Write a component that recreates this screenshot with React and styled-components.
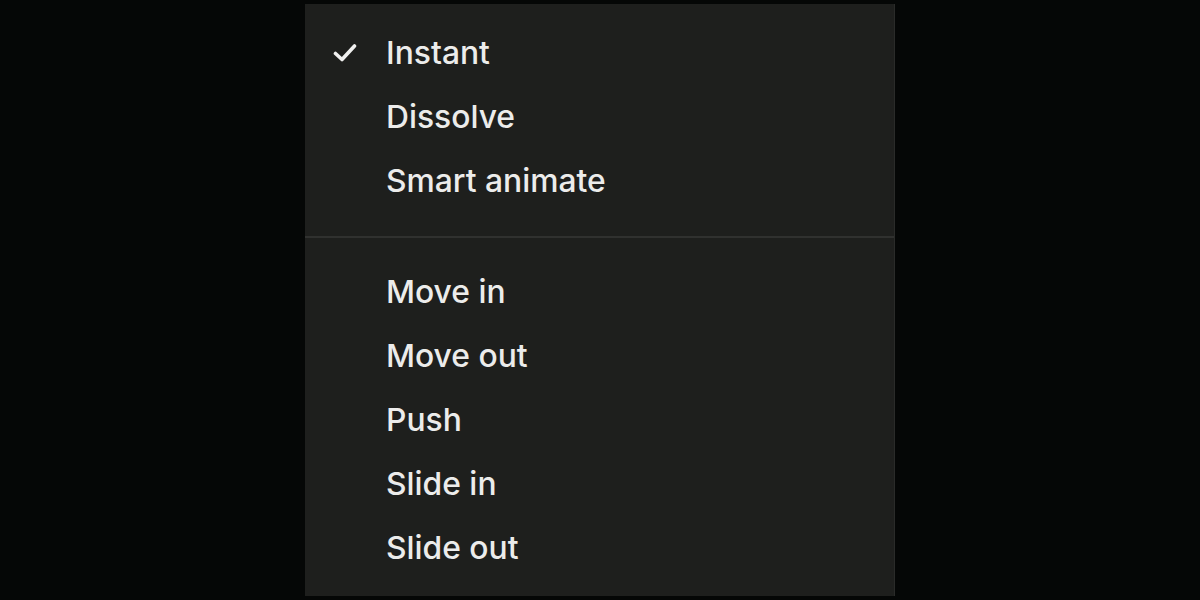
import React from "react";
import styled, { createGlobalStyle } from "styled-components";

const GlobalStyle = createGlobalStyle`
  html, body {
    margin: 0;
    padding: 0;
    background: #050706;
  }
  body {
    font-family: Inter, "Noto Sans", sans-serif;
    -webkit-font-smoothing: antialiased;
  }
`;

const Page = styled.div`
  display: flex;
  justify-content: center;
  padding: 4px 0;
  height: 600px;
  box-sizing: border-box;
`;

const Menu = styled.div`
  width: 590px;
  height: 592px;
  box-sizing: border-box;
  background: #1e1f1d;
  border-right: 1px solid #2a2b29;
  padding: 17px 0 17px;
  display: flex;
  flex-direction: column;
`;

const Item = styled.div`
  display: flex;
  align-items: center;
  height: 64px;
  padding-left: 28px;
  color: #ececeb;
  font-size: 31.8px;
  font-weight: 500;
`;

const CheckSlot = styled.span`
  width: 53px;
  display: flex;
  align-items: center;
`;

const Separator = styled.div`
  height: 2px;
  background: #30312f;
  margin: 23px 0 22px;
`;

const Check = () => (
  <svg width="24" height="20" viewBox="0 0 24 20">
    <path
      d="M2.5 10.5 L9 16.5 L21.5 3"
      fill="none"
      stroke="#f0f0ef"
      strokeWidth="3.6"
      strokeLinecap="round"
      strokeLinejoin="round"
    />
  </svg>
);

const groups = [
  ["Instant", "Dissolve", "Smart animate"],
  ["Move in", "Move out", "Push", "Slide in", "Slide out"],
];

export default function App() {
  const selected = "Instant";
  return (
    <>
      <GlobalStyle />
      <Page>
        <Menu>
          {groups.map((group, gi) => (
            <React.Fragment key={gi}>
              {gi > 0 && <Separator />}
              {group.map((label) => (
                <Item key={label}>
                  <CheckSlot>{label === selected && <Check />}</CheckSlot>
                  {label}
                </Item>
              ))}
            </React.Fragment>
          ))}
        </Menu>
      </Page>
    </>
  );
}
